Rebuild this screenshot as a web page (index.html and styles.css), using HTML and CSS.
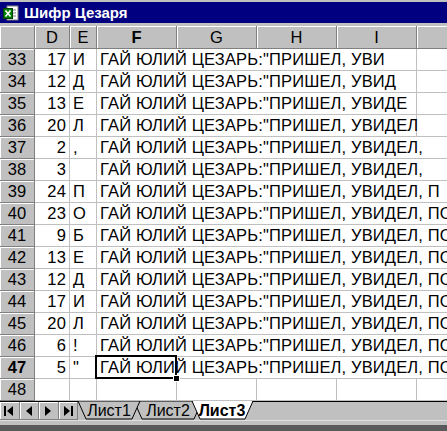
FILE: index.html
```html
<!DOCTYPE html>
<html lang="ru">
<head>
  <meta charset="UTF-8" />
  <title>Шифр Цезаря</title>
  <link rel="stylesheet" href="styles.css">
</head>

<body>

  <div class="window">
    <div class="titlebar">
      <svg class="app-icon" width="16" height="16" viewBox="0 0 16 16">
        <rect x="4" y="1" width="11" height="14" fill="#fff" stroke="#808080"/>
        <line x1="7" y1="5" x2="13" y2="5" stroke="#808080"/>
        <line x1="7" y1="8" x2="13" y2="8" stroke="#808080"/>
        <line x1="7" y1="11" x2="13" y2="11" stroke="#808080"/>
        <rect x="0.5" y="3.5" width="9" height="10" fill="#008000" stroke="#004000"/>
        <path d="M2.5 5.5 L7.5 11.5 M7.5 5.5 L2.5 11.5" stroke="#fff" stroke-width="1.6"/>
      </svg>
      <span class="title">Шифр Цезаря</span>
    </div>

    <div class="sheet">
      <!-- заголовки столбцов -->
      <div class="row head">
        <div class="corner"></div>
        <div class="ch d">D</div>
        <div class="ch e">E</div>
        <div class="ch f sel">F</div>
        <div class="ch g">G</div>
        <div class="ch h">H</div>
        <div class="ch i">I</div>
        <div class="ch j"></div>
      </div>

      <div class="row">
        <div class="rh">33</div><div class="c d num">17</div><div class="c e">И</div>
        <div class="c f wide">ГАЙ ЮЛИЙ ЦЕЗАРЬ:"ПРИШЕЛ, УВИ</div><div class="c j"></div>
      </div>
      <div class="row">
        <div class="rh">34</div><div class="c d num">12</div><div class="c e">Д</div>
        <div class="c f wide">ГАЙ ЮЛИЙ ЦЕЗАРЬ:"ПРИШЕЛ, УВИД</div><div class="c j"></div>
      </div>
      <div class="row">
        <div class="rh">35</div><div class="c d num">13</div><div class="c e">Е</div>
        <div class="c f wide">ГАЙ ЮЛИЙ ЦЕЗАРЬ:"ПРИШЕЛ, УВИДЕ</div><div class="c j"></div>
      </div>
      <div class="row">
        <div class="rh">36</div><div class="c d num">20</div><div class="c e">Л</div>
        <div class="c f wide">ГАЙ ЮЛИЙ ЦЕЗАРЬ:"ПРИШЕЛ, УВИДЕЛ</div><div class="c j"></div>
      </div>
      <div class="row">
        <div class="rh">37</div><div class="c d num">2</div><div class="c e">,</div>
        <div class="c f full">ГАЙ ЮЛИЙ ЦЕЗАРЬ:"ПРИШЕЛ, УВИДЕЛ,</div>
      </div>
      <div class="row">
        <div class="rh">38</div><div class="c d num">3</div><div class="c e"></div>
        <div class="c f full">ГАЙ ЮЛИЙ ЦЕЗАРЬ:"ПРИШЕЛ, УВИДЕЛ,</div>
      </div>
      <div class="row">
        <div class="rh">39</div><div class="c d num">24</div><div class="c e">П</div>
        <div class="c f full">ГАЙ ЮЛИЙ ЦЕЗАРЬ:"ПРИШЕЛ, УВИДЕЛ, П</div>
      </div>
      <div class="row">
        <div class="rh">40</div><div class="c d num">23</div><div class="c e">О</div>
        <div class="c f full">ГАЙ ЮЛИЙ ЦЕЗАРЬ:"ПРИШЕЛ, УВИДЕЛ, ПО</div>
      </div>
      <div class="row">
        <div class="rh">41</div><div class="c d num">9</div><div class="c e">Б</div>
        <div class="c f full">ГАЙ ЮЛИЙ ЦЕЗАРЬ:"ПРИШЕЛ, УВИДЕЛ, ПОБ</div>
      </div>
      <div class="row">
        <div class="rh">42</div><div class="c d num">13</div><div class="c e">Е</div>
        <div class="c f full">ГАЙ ЮЛИЙ ЦЕЗАРЬ:"ПРИШЕЛ, УВИДЕЛ, ПОБЕ</div>
      </div>
      <div class="row">
        <div class="rh">43</div><div class="c d num">12</div><div class="c e">Д</div>
        <div class="c f full">ГАЙ ЮЛИЙ ЦЕЗАРЬ:"ПРИШЕЛ, УВИДЕЛ, ПОБЕД</div>
      </div>
      <div class="row">
        <div class="rh">44</div><div class="c d num">17</div><div class="c e">И</div>
        <div class="c f full">ГАЙ ЮЛИЙ ЦЕЗАРЬ:"ПРИШЕЛ, УВИДЕЛ, ПОБЕДИ</div>
      </div>
      <div class="row">
        <div class="rh">45</div><div class="c d num">20</div><div class="c e">Л</div>
        <div class="c f full">ГАЙ ЮЛИЙ ЦЕЗАРЬ:"ПРИШЕЛ, УВИДЕЛ, ПОБЕДИЛ</div>
      </div>
      <div class="row">
        <div class="rh">46</div><div class="c d num">6</div><div class="c e">!</div>
        <div class="c f full">ГАЙ ЮЛИЙ ЦЕЗАРЬ:"ПРИШЕЛ, УВИДЕЛ, ПОБЕДИЛ!</div>
      </div>
      <div class="row">
        <div class="rh sel">47</div><div class="c d num">5</div><div class="c e">"</div>
        <div class="c f full active">ГАЙ ЮЛИЙ ЦЕЗАРЬ:"ПРИШЕЛ, УВИДЕЛ, ПОБЕДИЛ!"<span class="cursor"></span><span class="handle"></span></div>
      </div>
      <div class="row">
        <div class="rh">48</div><div class="c d"></div><div class="c e"></div>
        <div class="c f"></div><div class="c g"></div><div class="c h"></div><div class="c i"></div><div class="c j"></div>
      </div>
    </div>

    <div class="tabbar">
      <div class="nav">
        <div class="navbtn">
          <svg width="12" height="12" viewBox="0 0 12 12"><rect x="1" y="1" width="2" height="10"/><path d="M10 1 L4 6 L10 11 Z"/></svg>
        </div>
        <div class="navbtn">
          <svg width="12" height="12" viewBox="0 0 12 12"><path d="M9 1 L3 6 L9 11 Z"/></svg>
        </div>
        <div class="navbtn">
          <svg width="12" height="12" viewBox="0 0 12 12"><path d="M3 1 L9 6 L3 11 Z"/></svg>
        </div>
        <div class="navbtn">
          <svg width="12" height="12" viewBox="0 0 12 12"><path d="M2 1 L8 6 L2 11 Z"/><rect x="9" y="1" width="2" height="10"/></svg>
        </div>
      </div>
      <svg class="tabs" width="369" height="19" viewBox="0 0 369 19">
        <line x1="0" y1="0.5" x2="369" y2="0.5" stroke="#000"/>
        <polygon points="56,0 64,18 116,18 124,0" fill="#c0c0c0" stroke="#000"/>
        <text x="90" y="15" class="tab-text" text-anchor="middle">Лист2</text>
        <polygon points="0,0 8,18 54,18 62,0" fill="#c0c0c0" stroke="#000"/>
        <text x="31" y="15" class="tab-text" text-anchor="middle">Лист1</text>
        <polygon points="114,0 122,18 167,18 175,0" fill="#fff" stroke="#000"/>
        <line x1="115" y1="0.5" x2="174" y2="0.5" stroke="#fff"/>
        <text x="144" y="15" class="tab-text active" text-anchor="middle">Лист3</text>
      </svg>
    </div>

    <div class="bottom"></div>
  </div>

</body>
</html>
```

FILE: styles.css
```css
body {
  margin: 0;
  font-family: "Liberation Sans", Arial, sans-serif;
  background: #c0c0c0;
  overflow: hidden;
}

.window {
  width: 447px;
  height: 431px;
  overflow: hidden;
  background: #c0c0c0;
  border-top: 2px solid #c0c0c0;
  box-sizing: border-box;
}

.titlebar {
  height: 21px;
  background: #000080;
  display: flex;
  align-items: center;
  padding-left: 3px;
  gap: 5px;
  color: #fff;
}

.title {
  font-weight: bold;
  font-size: 15px;
}

.sheet {
  margin-top: 3px;
  background: #fff;
}

.row {
  display: flex;
  height: 22px;
}

.row.head {
  height: 23px;
}

/* ширины столбцов */
.d { width: 35px; }
.e { width: 27px; }
.f { width: 80px; }
.g, .h, .i { width: 80px; }
.j { flex: 1; }
.f.wide { width: 320px; }
.f.full { flex: 1; width: auto; }

.corner,
.ch,
.rh {
  background: #c0c0c0;
  border-right: 1px solid #808080;
  border-bottom: 1px solid #808080;
  box-shadow: inset 1px 1px 0 #fff;
  box-sizing: border-box;
  font-size: 16.5px;
  color: #000;
}

.corner,
.rh {
  width: 35px;
  flex: none;
}

.ch {
  display: flex;
  align-items: center;
  justify-content: center;
}

.ch.j {
  border-right: none;
}

.rh {
  display: flex;
  align-items: center;
  justify-content: center;
}

.sel {
  font-weight: bold;
}

.c {
  box-sizing: border-box;
  border-right: 1px solid #c0c0c0;
  border-bottom: 1px solid #c0c0c0;
  font-size: 16.5px;
  letter-spacing: 0.15px;
  line-height: 21px;
  white-space: nowrap;
  flex: none;
  color: #000;
}

.c.j,
.c.f.full {
  flex: 1;
  border-right: none;
}

.c.num {
  text-align: right;
  padding-right: 3px;
}

.c.e {
  padding-left: 3px;
}

.c.f {
  padding-left: 3px;
}

.c.active {
  position: relative;
}

.cursor {
  position: absolute;
  left: -2px;
  top: -2px;
  width: 82px;
  height: 24px;
  border: 2px solid #000;
  box-sizing: border-box;
}

.handle {
  position: absolute;
  left: 76px;
  top: 18px;
  width: 5px;
  height: 5px;
  background: #000;
  border: 1px solid #fff;
}

.tabbar {
  display: flex;
  height: 19px;
  background: #c0c0c0;
}

.nav {
  display: flex;
  width: 78px;
  flex: none;
  border-top: 1px solid #000;
  box-sizing: border-box;
}

.navbtn {
  width: 19.5px;
  height: 18px;
  box-sizing: border-box;
  border-right: 1px solid #808080;
  border-bottom: 1px solid #808080;
  box-shadow: inset 1px 1px 0 #fff;
  display: flex;
  align-items: center;
  justify-content: center;
}

.navbtn svg {
  fill: #000;
}

.tabs {
  display: block;
}

.tab-text {
  font-family: "Liberation Sans", Arial, sans-serif;
  font-size: 16px;
  fill: #000;
}

.tab-text.active {
  font-weight: bold;
}

.bottom {
  height: 12px;
  border-top: 1px solid #e0e0e0;
  background: linear-gradient(#c0c0c0 0, #c0c0c0 4px, #5a5a5a 4px);
}
```
